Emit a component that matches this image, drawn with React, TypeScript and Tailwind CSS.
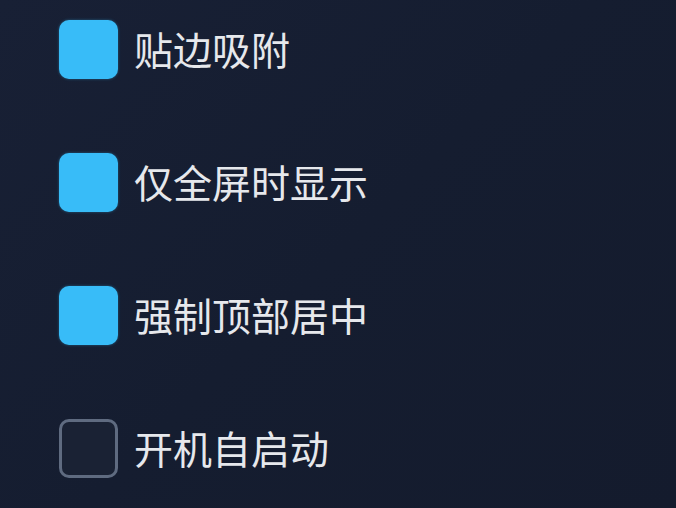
import React from "react";

const items = [
  { label: "贴边吸附", checked: true },
  { label: "仅全屏时显示", checked: true },
  { label: "强制顶部居中", checked: true },
  { label: "开机自启动", checked: false },
];

export default function App() {
  return (
    <div
      className="w-[676px] h-[508px] overflow-hidden bg-[linear-gradient(135deg,#182035_0%,#151d30_50%,#141b2d_100%)]"
      style={{ fontFamily: '"Noto Sans CJK SC", "Noto Sans", sans-serif' }}
    >
      <div className="flex flex-col gap-[74px] pl-[59px] pt-[20px]">
        {items.map((it) => (
          <div key={it.label} className="flex items-center gap-[16px] h-[59px]">
            {it.checked ? (
              <div className="w-[59px] h-[59px] rounded-[10px] bg-[#38bcf8] shadow-[0_0_3px_rgba(56,188,248,0.4)]" />
            ) : (
              <div className="w-[59px] h-[59px] rounded-[10px] border-[3px] border-[#5f6b80] bg-[#1a2234]" />
            )}
            <span className="text-[39px] leading-none text-[#e6e8ec] font-normal -mt-[2px]">{it.label}</span>
          </div>
        ))}
      </div>
    </div>
  );
}
